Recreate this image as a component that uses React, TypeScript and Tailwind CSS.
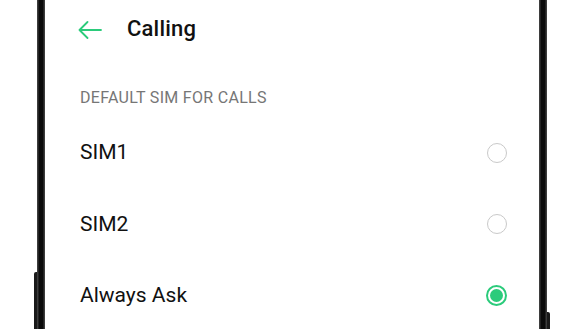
const OPTIONS = [
  { label: "SIM1", checked: false },
  { label: "SIM2", checked: false },
  { label: "Always Ask", checked: true },
];

const Radio = ({ checked }: { checked: boolean }) =>
  checked ? (
    <div className="w-[21px] h-[21px] rounded-full border-2 border-[#2bcb7b] flex items-center justify-center">
      <div className="w-[13px] h-[13px] rounded-full bg-[#2bcb7b]"></div>
    </div>
  ) : (
    <div className="w-[20px] h-[20px] rounded-full border-[1.5px] border-[#c9c9c9]"></div>
  );

const Bezel = () => (
  <div className="w-[8px] h-full bg-[linear-gradient(90deg,#4a4a4a,#0b0b0b_30%,#0b0b0b_70%,#4a4a4a)]"></div>
);

export default function App() {
  return (
    <div
      className="w-[574px] h-[329px] bg-white flex overflow-hidden"
      style={{ fontFamily: "Roboto, 'Liberation Sans', sans-serif" }}
    >
      {/* left side, with volume button */}
      <div className="w-[37px] h-full flex flex-col items-end pt-[272px]">
        <div className="w-[3px] flex-1 bg-[#1a1a1a] rounded-tl-[2px]"></div>
      </div>
      <Bezel />

      <div className="flex-1 h-full flex flex-col pl-[35px] pr-[32px] overflow-hidden">
        <div className="h-[57px] shrink-0 flex items-center">
          <svg
            width="24"
            height="18"
            viewBox="0 0 24 18"
            fill="none"
            stroke="#2bcb7b"
            strokeWidth="1.8"
            strokeLinecap="round"
            strokeLinejoin="round"
            className="-ml-[2px] mt-[2px]"
          >
            <path d="M23 9H1.5M9.5 1L1.5 9l8 8" />
          </svg>
          <div className="ml-[25px] text-[22px] font-medium text-[#111] tracking-[0.2px]">
            Calling
          </div>
        </div>

        <div className="mt-[31px] shrink-0 text-[16px] text-[#767676] tracking-[0.3px] leading-[20px]">
          DEFAULT SIM FOR CALLS
        </div>

        <div className="mt-[9px] shrink-0 flex flex-col">
          {OPTIONS.map((o) => (
            <div key={o.label} className="h-[71.5px] shrink-0 flex items-center justify-between">
              <div className="text-[21px] text-[#111]">{o.label}</div>
              <Radio checked={o.checked} />
            </div>
          ))}
        </div>
      </div>

      <Bezel />
      {/* right side, with power button */}
      <div className="w-[27px] h-full flex flex-col items-start pt-[312px]">
        <div className="w-[3px] flex-1 bg-[#1a1a1a] rounded-tr-[2px]"></div>
      </div>
    </div>
  );
}
